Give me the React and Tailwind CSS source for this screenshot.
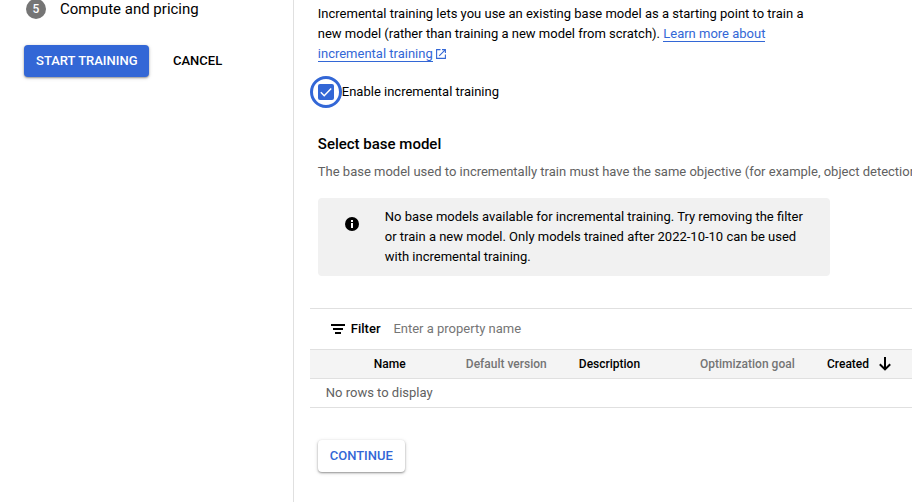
import React from "react";

function ExternalLinkIcon() {
  return (
    <svg className="ml-[3px] inline-block h-[10px] w-[10px] align-[-1px]" viewBox="0 0 10 10" fill="none" stroke="#3367d6" strokeWidth="1.1">
      <path d="M4.5 .6H.6v8.8h8.8V5.5" />
      <path d="M6 .6h3.4V4M9.2 .8L3.2 6.8" />
    </svg>
  );
}

function Sidebar() {
  return (
    <aside className="w-[293.8px] shrink-0 border-r border-[#e0e0e0]">
      <div className="-mt-[2px] flex h-[22px] items-center pl-[26px]">
        <span className="flex h-5 w-5 items-center justify-center rounded-full bg-[#757575] text-[12px] font-medium text-white">5</span>
        <span className="ml-[14px] text-[15px] leading-5">Compute and pricing</span>
      </div>
      <div className="mt-[25px] flex gap-3 pl-6">
        <button className="h-8 w-[125px] rounded-[4px] bg-[#3367d6] pl-[0.6px] text-[13px] font-medium whitespace-nowrap text-white shadow-[0_1px_2px_rgba(0,0,0,0.35),0_1px_4px_rgba(0,0,0,0.15)]">
          START TRAINING
        </button>
        <button className="h-8 px-3 text-[13px] font-medium">CANCEL</button>
      </div>
    </aside>
  );
}

function ModelsTable() {
  return (
    <section className="mt-8 ml-4 border-y border-[#e0e0e0]">
      <div className="flex h-10 items-center pl-[21px]">
        <svg className="h-[10px] w-[14px]" viewBox="0 0 14 10" shapeRendering="crispEdges">
          <path d="M0 0h14v2H0zM2 4h10v2H2zM4 8h6v2H4z" />
        </svg>
        <span className="ml-[6px] w-[42.6px] text-[13px] font-medium">Filter</span>
        <span className="text-[13px] text-[#757575]">Enter a property name</span>
      </div>
      <div className="flex h-[30px] items-center border-y border-[#e0e0e0] bg-[#f4f4f4] pl-16 text-[12px] font-medium whitespace-nowrap">
        <span className="w-[92px]">Name</span>
        <span className="w-[113px] text-[#757575]">Default version</span>
        <span className="w-[121.2px]">Description</span>
        <span className="w-[127px] text-[#757575]">Optimization goal</span>
        <span>Created</span>
        <svg className="ml-[10px] h-[14px] w-3" viewBox="0 0 12 14" fill="none" stroke="#000" strokeWidth="2">
          <path d="M6 0v12.5M.8 7.2L6 12.4l5.2-5.2" />
        </svg>
      </div>
      <div className="flex h-7 items-center pl-4 text-[13px] text-[#616161]">No rows to display</div>
    </section>
  );
}

export default function App() {
  return (
    <div className="flex h-[502px] w-[912px] overflow-hidden bg-white font-['Roboto',sans-serif] text-[13px] leading-5 text-black">
      <Sidebar />
      <main className="min-w-0 flex-1 pt-1">
        <p className="ml-6 w-[500px]">
          Incremental training lets you use an existing base model as a starting point to train a
          <br />
          new model (rather than training a new model from scratch).{" "}
          <a className="border-b border-[#3367d6] text-[#3367d6]">
            Learn more about
            <br />
            incremental training
          </a>
          <ExternalLinkIcon />
        </p>
        <label className="mt-3 ml-4 flex h-8 items-center">
          <span className="flex h-8 w-8 items-center justify-center rounded-full border-[3px] border-[#3367d6]">
            <svg className="h-4 w-4 rounded-[2px] bg-[#3367d6]" viewBox="0 0 16 16" fill="none" stroke="#fff" strokeWidth="1.5">
              <path d="M2.8 8.3l3.4 3.4 7-7.2" />
            </svg>
          </span>
          <span>Enable incremental training</span>
        </label>
        <h2 className="mt-6 ml-6 text-[15px] leading-6 font-medium">Select base model</h2>
        <p className="mt-[6px] ml-6 whitespace-nowrap text-[#616161]">
          The base model used to incrementally train must have the same objective (for example, object detection)
        </p>
        <div className="mt-4 ml-6 flex h-[78px] w-[512px] rounded-[4px] bg-[#f1f1f1] pt-[9px] pl-[27px]">
          <svg className="mt-[10px] h-[14px] w-[14px] shrink-0" viewBox="0 0 14 14">
            <circle cx="7" cy="7" r="7" />
            <path d="M6 3h2v2H6zM6 6h2v5H6z" fill="#fff" />
          </svg>
          <p className="ml-[26px] whitespace-nowrap">
            No base models available for incremental training. Try removing the filter
            <br />
            or train a new model. Only models trained after 2022-10-10 can be used
            <br />
            with incremental training.
          </p>
        </div>
        <ModelsTable />
        <button className="mt-8 ml-6 h-8 w-[87px] rounded-[4px] bg-white text-[13px] font-medium text-[#3367d6] shadow-[0_1px_2px_rgba(0,0,0,0.35),0_1px_4px_rgba(0,0,0,0.15)]">
          CONTINUE
        </button>
      </main>
    </div>
  );
}
